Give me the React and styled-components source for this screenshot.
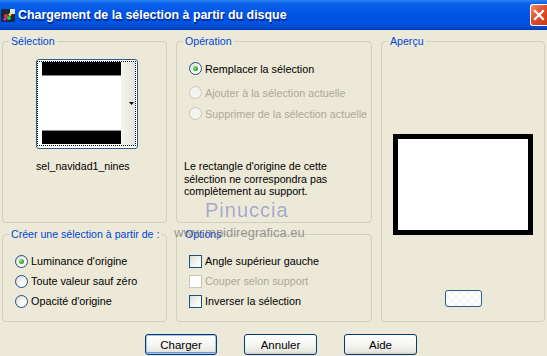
import React from 'react'
import styled, { createGlobalStyle } from 'styled-components'

const Global = createGlobalStyle`
body{
  margin:0;
  background:#ece9d8;
  font-family:"Liberation Sans", Arial, sans-serif;
}
`;

const Window = styled.div`
width:547px;
height:356px;
background:#ece9d8;
display:flex;
flex-direction:column;
position:relative;
overflow:hidden;
font-size:11px;
color:#000;
`;

const TitleBar = styled.div`
height:30px;
flex-shrink:0;
display:flex;
align-items:center;
background:linear-gradient(to bottom,#2f86f5 0%,#0a5fe9 12%,#0055e5 45%,#0052e0 80%,#0047c8 93%,#003aa8 100%);
padding-left:1px;
`;

const Title = styled.div`
flex:1;
margin-left:2px;
color:#fff;
font-weight:bold;
font-size:12.4px;
white-space:nowrap;
transform:scaleY(1.1);
text-shadow:1px 1px 0 #0b2a8c;
`;

const Close = styled.div`
width:16px;
height:20px;
margin-top:-1px;
border:1px solid #fff;
border-right:none;
border-radius:3px 0 0 3px;
background:linear-gradient(135deg,#f0906e 0%,#e0512c 45%,#c73a14 100%);
display:flex;
align-items:center;
justify-content:center;
`;

const Body = styled.div`
display:grid;
grid-template-columns:165px 196px 164px;
grid-template-rows:188px 94px;
column-gap:9px;
row-gap:5px;
padding:5px 0 0 2px;
`;

const Group = styled.fieldset`
margin:0;
padding:0;
min-width:0;
box-sizing:border-box;
border:1px solid #d0d0bf;
border-radius:4px;
display:flex;
flex-direction:column;
grid-column:${p => p.col};
grid-row:${p => p.row};
`;

const Legend = styled.legend`
color:#0046d5;
font-size:10.6px;
line-height:12px;
padding:0 2px;
margin-left:6px;
white-space:nowrap;
`;

const SelBox = styled.div`
display:flex;
flex-direction:column;
align-items:flex-start;
padding:12px 0 0 33px;
`;

const Thumb = styled.div`
width:99px;
height:85px;
border:1px solid #2c5d8f;
border-radius:3px;
padding:1px 1px 2px 0;
background:#fff;
`;

const Focus = styled.div`
height:100%;
box-sizing:border-box;
border:1px dotted #000;
display:flex;
`;

const Pic = styled.div`
width:79px;
margin:0 0 1px 4px;
display:flex;
flex-direction:column;
`;

const Bar = styled.div`
height:13px;
background:#000;
border-${p => p.bottom ? 'top' : 'bottom'}:1px solid #8a8a8a;
`;

const Blank = styled.div`
flex:1;
background:#fff;
`;

const Strip = styled.div`
flex:1;
background:linear-gradient(to right,#f4f4f0,#e6e4dc);
display:flex;
align-items:center;
justify-content:flex-end;
padding-right:1px;
`;

const FileName = styled.div`
margin-top:11px;
font-size:10.6px;
white-space:nowrap;
`;

const Options = styled.div`
display:flex;
flex-direction:column;
padding:${p => p.top || 11}px 0 0 12px;
`;

const Row = styled.label`
height:${p => p.h || 20}px;
display:flex;
align-items:center;
gap:3px;
font-size:10.8px;
white-space:nowrap;
color:${p => p.disabled ? '#aca899' : '#000'};
margin-top:${p => p.mt || 0}px;
`;

const Radio = styled.span`
width:11px;
height:11px;
border-radius:50%;
border:1px solid ${p => p.disabled ? '#cac8bb' : '#1c5180'};
background:${p => p.disabled ? '#f4f3ee' : 'linear-gradient(135deg,#dcd9cf 0%,#fbfbf9 60%,#ffffff 100%)'};
display:flex;
align-items:center;
justify-content:center;
flex-shrink:0;
&::after{
  content:"";
  display:${p => p.checked ? 'block' : 'none'};
  width:5px;
  height:5px;
  border-radius:50%;
  background:radial-gradient(circle at 35% 35%,#8fe48f,#21a121 70%);
}
`;

const Check = styled.span`
width:11px;
height:11px;
border:1px solid ${p => p.disabled ? '#cac8bb' : '#1c5180'};
background:${p => p.disabled ? '#fff' : 'linear-gradient(135deg,#dcdcd7 0%,#f6f6f4 60%,#ffffff 100%)'};
flex-shrink:0;
`;

const Info = styled.div`
margin:36px 0 0 7px;
line-height:12.5px;
font-size:10.7px;
white-space:nowrap;
`;

const PreviewBox = styled.div`
display:flex;
flex-direction:column;
align-items:center;
padding-top:87px;
`;

const Preview = styled.div`
width:130px;
height:91px;
border:5px solid #000;
background:#fff;
`;

const SmallBtn = styled.div`
margin-top:55px;
width:35px;
height:15px;
border:1px solid #2c5d8f;
border-radius:3px;
background:
  conic-gradient(#f6f6f4 25%, #ffffff 0 50%, #f6f6f4 0 75%, #ffffff 0) 0 0/8px 8px,
  #fafaf8;
`;

const Buttons = styled.div`
display:flex;
gap:27px;
padding:12px 0 0 145px;
`;

const Button = styled.button`
width:${p => p.w || 73}px;
height:21px;
padding:0;
font-family:"Liberation Sans", Arial, sans-serif;
font-size:11.5px;
color:#000;
border:1px solid #003c74;
border-radius:3px;
background:linear-gradient(to bottom,#ffffff 0%,#f5f5f2 50%,#e9e8e2 85%,#d6d0c5 100%);
box-shadow:${p => p.primary ? 'inset 0 0 0 1px #a9c4ef, inset 0 -1px 0 1px #6f95d9' : 'none'};
`;

const Mark = styled.div`
position:absolute;
left:205px;
top:199px;
font-family:"Liberation Sans", Arial, sans-serif;
font-size:20px;
letter-spacing:1px;
color:rgba(128,128,176,0.7);
text-shadow:0 0 1px #fff;
pointer-events:none;
`;

const MarkUrl = styled.div`
position:absolute;
left:174px;
top:225px;
font-family:"Liberation Sans", Arial, sans-serif;
font-size:13px;
color:rgba(120,120,120,0.75);
pointer-events:none;
`;

const AppIcon = () => (
    <svg width="15" height="15" viewBox="0 0 15 15">
        <rect x="0" y="1" width="14" height="13" rx="2" fill="#1b2a3a" />
        <rect x="9" y="1" width="5" height="5" fill="#d8e4f0" />
        <circle cx="5" cy="8" r="2" fill="#e33" />
        <circle cx="8" cy="10" r="2" fill="#3c3" />
        <circle cx="4" cy="11" r="1.6" fill="#c3c" />
        <circle cx="9" cy="6.5" r="1.5" fill="#fc3" />
    </svg>
)

const App = () => {
    return (
        <Window>
            <Global />
            <TitleBar>
                <AppIcon />
                <Title>Chargement de la sélection à partir du disque</Title>
                <Close>
                    <svg width="12" height="12" viewBox="0 0 12 12">
                        <path d="M2 2 L10 10 M10 2 L2 10" stroke="#fff" strokeWidth="2.2" strokeLinecap="square" />
                    </svg>
                </Close>
            </TitleBar>
            <Body>
                <Group col="1" row="1">
                    <Legend>Sélection</Legend>
                    <SelBox>
                        <Thumb>
                            <Focus>
                                <Pic>
                                    <Bar />
                                    <Blank />
                                    <Bar bottom />
                                </Pic>
                                <Strip>
                                    <svg width="5" height="4" viewBox="0 0 5 4">
                                        <path d="M0 0 H5 L2.5 3 Z" fill="#000" />
                                    </svg>
                                </Strip>
                            </Focus>
                        </Thumb>
                        <FileName>sel_navidad1_nines</FileName>
                    </SelBox>
                </Group>
                <Group col="2" row="1">
                    <Legend>Opération</Legend>
                    <Options top={11}>
                        <Row h={21}><Radio checked />Remplacer la sélection</Row>
                        <Row h={21} mt={3} disabled><Radio disabled />Ajouter à la sélection actuelle</Row>
                        <Row h={21} disabled><Radio disabled />Supprimer de la sélection actuelle</Row>
                    </Options>
                    <Info>
                        Le rectangle d'origine de cette<br />
                        sélection ne correspondra pas<br />
                        complètement au support.
                    </Info>
                </Group>
                <Group col="3" row="1 / 3">
                    <Legend>Aperçu</Legend>
                    <PreviewBox>
                        <Preview />
                        <SmallBtn />
                    </PreviewBox>
                </Group>
                <Group col="1" row="2">
                    <Legend>Créer une sélection à partir de :</Legend>
                    <Options>
                        <Row><Radio checked />Luminance d'origine</Row>
                        <Row><Radio />Toute valeur sauf zéro</Row>
                        <Row><Radio />Opacité d'origine</Row>
                    </Options>
                </Group>
                <Group col="2" row="2">
                    <Legend>Options</Legend>
                    <Options>
                        <Row><Check />Angle supérieur gauche</Row>
                        <Row disabled><Check disabled />Couper selon support</Row>
                        <Row><Check />Inverser la sélection</Row>
                    </Options>
                </Group>
            </Body>
            <Buttons>
                <Button primary w={72}>Charger</Button>
                <Button w={73}>Annuler</Button>
                <Button w={73}>Aide</Button>
            </Buttons>
            <Mark>Pinuccia</Mark>
            <MarkUrl>www.mpidiregrafica.eu</MarkUrl>
        </Window>
    )
}

export default App
